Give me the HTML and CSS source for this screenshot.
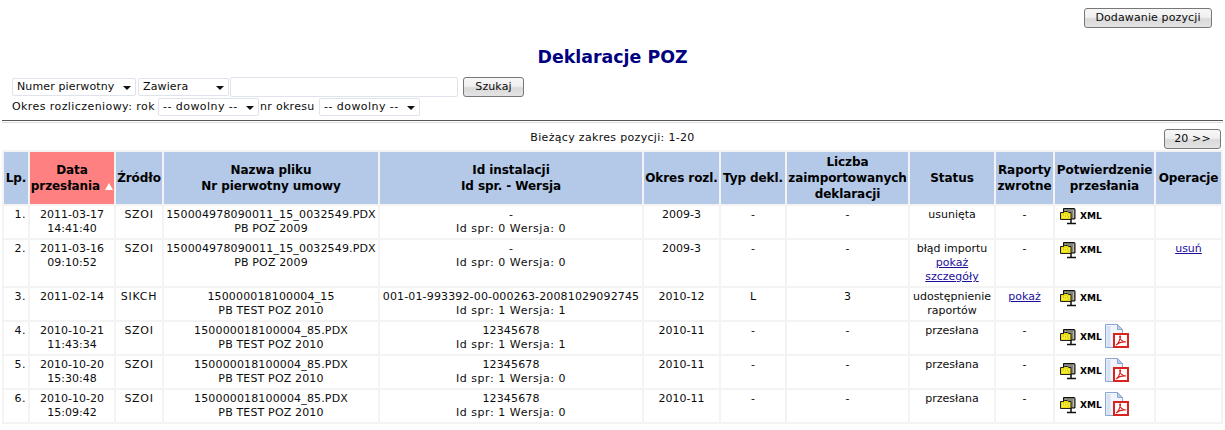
FILE: index.html
```html
<!doctype html>
<html lang="pl">

<head>
  <meta charset="UTF-8">
  <title>Deklaracje POZ</title>
  <link rel="stylesheet" href="styles.css">
</head>

<body>
  <svg class="defs" width="0" height="0">
    <symbol id="ico-net" viewBox="0 0 16 17">
      <path d="M3.500 .5h11l.5.5v10h-11.500z" fill="#77776e" stroke="#111"/>
      <path d="M5 2h9v8H5z" fill="#b9b9ae"/>
      <path d="M6 3h7M6 5h7M6 7h7M6 9h7" stroke="#55554e"/>
      <path d="M.5 4.500h3l1-1h3l1 1h2.500v7H.5z" fill="#e9da17" stroke="#222"/>
      <path d="M2 6h8v4H2z" fill="#f8ee30"/>
      <path d="M3 7h1M5 8h1M7 7h1M8 9h1" stroke="#b5a80c"/>
      <path d="M11 11v4M7 15.500h9" stroke="#111" stroke-width="1.500"/>
    </symbol>
    <symbol id="ico-pdf" viewBox="0 0 26 25">
      <path d="M.5.5h12l5 5v18H.5z" fill="#f1f5fb" stroke="#8ba6d2"/>
      <path d="M12.500.5v5h5z" fill="#b9cdea" stroke="#8ba6d2"/>
      <path d="M1.500 2h4v21h-4z" fill="#d6e2f4"/>
      <rect x="9" y="10" width="14" height="13" fill="#fff" stroke="#d9231f" stroke-width="2"/>
      <path d="M11 21c2-1 3.500-4 4.500-8 .3-1.500-1-1.500-.8 0 .4 3 2.500 4.500 6.300 5-3-.5-6.500 0-10 3z" fill="none" stroke="#d9231f" stroke-width="1.100"/>
    </symbol>
  </svg>

  <header class="top-bar">
    <button class="btn btn-add">Dodawanie pozycji</button>
  </header>

  <h1 class="title">Deklaracje POZ</h1>

  <form class="filters">
    <div class="filter-row">
      <label class="sel sel-field"><select><option>Numer pierwotny</option></select></label>
      <label class="sel sel-op"><select><option>Zawiera</option></select></label>
      <input class="search" type="text">
      <button class="btn btn-search" type="button">Szukaj</button>
    </div>
    <div class="filter-row filter-row-2">
      <span class="lbl-rok">Okres rozliczeniowy: rok</span>
      <label class="sel sel-any"><select><option>-- dowolny --</option></select></label>
      <span class="lbl-nr">nr okresu</span>
      <label class="sel sel-any"><select><option>-- dowolny --</option></select></label>
    </div>
  </form>

  <hr class="rule">

  <div class="pager">
    <span class="range">Bieżący zakres pozycji: 1-20</span>
    <button class="btn btn-next">20 &gt;&gt;</button>
  </div>

  <table class="grid">
    <colgroup>
      <col class="c-lp"><col class="c-date"><col class="c-src"><col class="c-file"><col class="c-id">
      <col class="c-per"><col class="c-typ"><col class="c-cnt"><col class="c-stat"><col class="c-rap">
      <col class="c-conf"><col class="c-ops">
    </colgroup>
    <thead>
      <tr>
        <th>Lp.</th>
        <th class="sorted">Data<br>przesłania <i class="sort-up"></i></th>
        <th>Źródło</th>
        <th>Nazwa pliku<br>Nr pierwotny umowy</th>
        <th>Id instalacji<br>Id spr. - Wersja</th>
        <th>Okres rozl.</th>
        <th>Typ dekl.</th>
        <th>Liczba<br>zaimportowanych<br>deklaracji</th>
        <th>Status</th>
        <th>Raporty<br>zwrotne</th>
        <th>Potwierdzenie<br>przesłania</th>
        <th>Operacje</th>
      </tr>
    </thead>
    <tbody>
      <tr>
        <td class="lp">1.</td>
        <td>2011-03-17<br>14:41:40</td>
        <td class="src">SZOI</td>
        <td class="file">150004978090011_15_0032549.PDX<br>PB POZ 2009</td>
        <td class="file">-<br><span class="ver">Id spr: 0 Wersja: 0</span></td>
        <td>2009-3</td>
        <td>-</td>
        <td>-</td>
        <td>usunięta</td>
        <td>-</td>
        <td class="conf"><span class="conf-in"><svg class="ico-net"><use href="#ico-net"/></svg><b class="xml">XML</b></span></td>
        <td></td>
      </tr>
      <tr>
        <td class="lp">2.</td>
        <td>2011-03-16<br>09:10:52</td>
        <td class="src">SZOI</td>
        <td class="file">150004978090011_15_0032549.PDX<br>PB POZ 2009</td>
        <td class="file">-<br><span class="ver">Id spr: 0 Wersja: 0</span></td>
        <td>2009-3</td>
        <td>-</td>
        <td>-</td>
        <td>błąd importu<br><a href="#">pokaż szczegóły</a></td>
        <td>-</td>
        <td class="conf"><span class="conf-in"><svg class="ico-net"><use href="#ico-net"/></svg><b class="xml">XML</b></span></td>
        <td><a href="#">usuń</a></td>
      </tr>
      <tr>
        <td class="lp">3.</td>
        <td>2011-02-14</td>
        <td class="src">SIKCH</td>
        <td class="file">150000018100004_15<br>PB TEST POZ 2010</td>
        <td class="file">001-01-993392-00-000263-20081029092745<br><span class="ver">Id spr: 1 Wersja: 1</span></td>
        <td>2010-12</td>
        <td>L</td>
        <td>3</td>
        <td>udostępnienie raportów</td>
        <td><a href="#">pokaż</a></td>
        <td class="conf"><span class="conf-in"><svg class="ico-net"><use href="#ico-net"/></svg><b class="xml">XML</b></span></td>
        <td></td>
      </tr>
      <tr>
        <td class="lp">4.</td>
        <td>2010-10-21<br>11:43:34</td>
        <td class="src">SZOI</td>
        <td class="file">150000018100004_85.PDX<br>PB TEST POZ 2010</td>
        <td class="file">12345678<br><span class="ver">Id spr: 1 Wersja: 1</span></td>
        <td>2010-11</td>
        <td>-</td>
        <td>-</td>
        <td>przesłana</td>
        <td>-</td>
        <td class="conf"><span class="conf-in"><svg class="ico-net"><use href="#ico-net"/></svg><b class="xml">XML</b><svg class="ico-pdf"><use href="#ico-pdf"/></svg></span></td>
        <td></td>
      </tr>
      <tr>
        <td class="lp">5.</td>
        <td>2010-10-20<br>15:30:48</td>
        <td class="src">SZOI</td>
        <td class="file">150000018100004_85.PDX<br>PB TEST POZ 2010</td>
        <td class="file">12345678<br><span class="ver">Id spr: 1 Wersja: 0</span></td>
        <td>2010-11</td>
        <td>-</td>
        <td>-</td>
        <td>przesłana</td>
        <td>-</td>
        <td class="conf"><span class="conf-in"><svg class="ico-net"><use href="#ico-net"/></svg><b class="xml">XML</b><svg class="ico-pdf"><use href="#ico-pdf"/></svg></span></td>
        <td></td>
      </tr>
      <tr>
        <td class="lp">6.</td>
        <td>2010-10-20<br>15:09:42</td>
        <td class="src">SZOI</td>
        <td class="file">150000018100004_85.PDX<br>PB TEST POZ 2010</td>
        <td class="file">12345678<br><span class="ver">Id spr: 1 Wersja: 0</span></td>
        <td>2010-11</td>
        <td>-</td>
        <td>-</td>
        <td>przesłana</td>
        <td>-</td>
        <td class="conf"><span class="conf-in"><svg class="ico-net"><use href="#ico-net"/></svg><b class="xml">XML</b><svg class="ico-pdf"><use href="#ico-pdf"/></svg></span></td>
        <td></td>
      </tr>
    </tbody>
  </table>
</body>

</html>
```

FILE: styles.css
```css
body {
  margin: 0;
  background: #fff;
  color: #0c0c0c;
  font: 400 11px/14px "DejaVu Sans", sans-serif;
}

.defs {
  display: block;
  height: 0;
}

.btn {
  height: 20px;
  padding: 0 10px;
  border: 1px solid #777;
  border-radius: 3px;
  background: linear-gradient(#f7f7f7 0%, #f0f0f0 45%, #d9d9d9 55%, #e4e4e4 100%);
  color: #0c0c0c;
  font: inherit;
  letter-spacing: .12px;
}

.top-bar {
  display: flex;
  justify-content: flex-end;
  padding: 8px 13px 0 0;
}

.btn-add {
  width: 128px;
  padding: 0;
}

.btn-search {
  width: 61px;
  margin-left: 5px;
  padding: 0;
}

.title {
  margin: 19px 0 10px;
  height: 20px;
  color: #000080;
  font: 700 17.400px/20px "DejaVu Sans", sans-serif;
  text-align: center;
}

.filters {
  padding-left: 12px;
}

.filter-row {
  display: flex;
  align-items: center;
  height: 20px;
}

.filter-row-2 {
  height: 18px;
  margin-top: 1px;
}

.sel {
  position: relative;
  display: block;
  height: 18px;
}

/* the little down arrow of each dropdown */
.sel::after {
  content: "";
  position: absolute;
  right: 5px;
  top: 8px;
  border: 4px solid transparent;
  border-top-color: #111;
  border-bottom: 0;
  pointer-events: none;
}

.sel select {
  appearance: none;
  display: block;
  width: 100%;
  height: 100%;
  padding: 0 0 0 4px;
  border: 1px solid #dfe3ec;
  border-radius: 2px;
  background: #fff;
  color: #0c0c0c;
  font: inherit;
  letter-spacing: .13px;
}

.sel-field {
  width: 124px;
  margin-right: 2px;
}

.sel-op {
  width: 91px;
  margin-right: 1px;
}

.sel-any {
  width: 101px;
}

.sel-any select {
  letter-spacing: .45px;
}

.search {
  box-sizing: border-box;
  width: 228px;
  height: 20px;
  padding: 0;
  border: 1px solid #dfe3ec;
  border-radius: 2px;
}

.lbl-rok {
  width: 146px;
  letter-spacing: .42px;
}

.lbl-nr {
  width: 60px;
  padding-left: 1px;
  box-sizing: border-box;
  letter-spacing: .3px;
}

.rule {
  height: 1px;
  margin: 4px 2px 0;
  border: 0;
  border-top: 1px solid #555;
  border-bottom: 1px solid #ddd;
}

.pager {
  position: relative;
  height: 20px;
  margin-top: 6px;
  padding-right: 4px;
  display: flex;
  justify-content: flex-end;
}

.range {
  position: absolute;
  left: 0;
  right: 0;
  top: 2px;
  text-align: center;
  letter-spacing: .32px;
}

.btn-next {
  width: 57px;
  padding: 0;
}

.grid {
  table-layout: fixed;
  width: 1221px;
  margin: 1px 0 0 2px;
  border-collapse: separate;
  border-spacing: 2px;
  background: #f3f3f3;
}

.c-lp { width: 24px; }
.c-date { width: 84px; }
.c-src { width: 46px; }
.c-file { width: 214px; }
.c-id { width: 262px; }
.c-per { width: 75px; }
.c-typ { width: 64px; }
.c-cnt { width: 121px; }
.c-stat { width: 84px; }
.c-rap { width: 57px; }
.c-conf { width: 99px; }
.c-ops { width: 65px; }

.grid th {
  height: 52px;
  padding: 0;
  background: #b4c9e8;
  color: #000;
  font-size: 12px;
  font-weight: 700;
  line-height: 16px;
  letter-spacing: -.08px;
}

.grid th.sorted {
  background: #ff8080;
}

.sort-up {
  display: inline-block;
  margin-left: 1px;
  border: 4px solid transparent;
  border-bottom: 7px solid #fff;
  border-top: 0;
}

.grid td {
  padding: 2px 1px;
  background: #fff;
  text-align: center;
  vertical-align: top;
}

.grid .lp {
  padding-right: 2px;
  text-align: right;
  letter-spacing: .5px;
}

.grid .src {
  letter-spacing: .7px;
}

.grid .file {
  letter-spacing: .15px;
}

.ver {
  letter-spacing: .55px;
}

.grid a {
  color: #1a0f9c;
}

.grid .conf {
  padding: 2px 0 0 5px;
  text-align: left;
}

.conf-in {
  display: flex;
  align-items: center;
}

.ico-net {
  width: 16px;
  height: 17px;
  flex: none;
}

.xml {
  margin: 0 0 1px 4px;
  width: 25px;
  font-size: 9px;
  color: #000;
}

.ico-pdf {
  width: 26px;
  height: 25px;
  margin-bottom: 1px;
  flex: none;
}
```
